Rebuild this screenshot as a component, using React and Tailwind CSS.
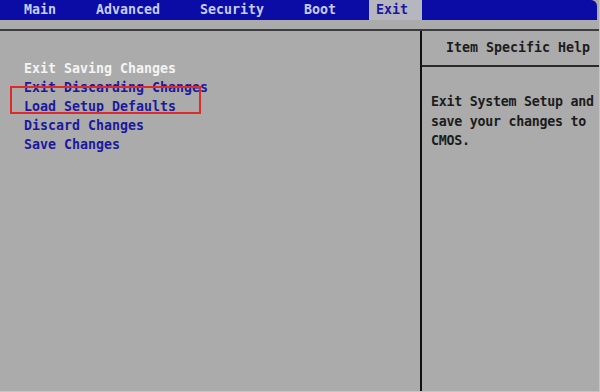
const tabs = ["Main", "Advanced", "Security", "Boot", "Exit"];

const items = [
  { label: "Exit Saving Changes", active: true },
  { label: "Exit Discarding Changes" },
  { label: "Load Setup Defaults" },
  { label: "Discard Changes" },
  { label: "Save Changes" },
];

export default function App() {
  return (
    <div className="relative w-[600px] h-[392px] bg-[#ababab] flex flex-col font-['DejaVu_Sans_Mono',monospace] text-[13.29px] overflow-hidden border-r border-b border-[#c4c4c4]">
      {/* menu bar */}
      <nav className="h-[20px] flex items-stretch pl-[17px] gap-[26px] bg-[#0b0ba6] rounded-tr-[6px] mr-[2px]">
        {tabs.map((t) => (
          <div
            key={t}
            className={
              t === "Exit"
                ? "pl-[7px] pr-[14px] flex items-center bg-[#b6b6be] text-[#1818a0] font-bold"
                : "px-[7px] flex items-center text-[#c6cdf2] font-bold"
            }
          >
            {t}
          </div>
        ))}
      </nav>

      <div className="mt-[9px] flex flex-1 border-t-2 border-[#3c3c3c]">
        {/* option list */}
        <div className="w-[422px] border-r-2 border-[#111] pt-[28px] pl-[24px]">
          {items.map((it) => (
            <div
              key={it.label}
              className={
                it.active
                  ? "h-[19px] leading-[19px] text-[#f4f4f4] font-bold"
                  : "h-[19px] leading-[19px] text-[#1a1a9e] font-bold"
              }
            >
              {it.label}
            </div>
          ))}
        </div>

        {/* help panel */}
        <div className="flex-1 min-w-0 flex flex-col">
          <div className="h-[36px] border-b-2 border-[#2a2a2a] flex items-center pl-[24px] text-[#1c1c1c] font-bold whitespace-nowrap">
            Item Specific Help
          </div>
          <div className="pt-[25px] pl-[9px] leading-[19.5px] text-[#1c1c1c] font-bold whitespace-nowrap tracking-[-0.25px]">
            <div>Exit System Setup and</div>
            <div>save your changes to</div>
            <div>CMOS.</div>
          </div>
        </div>
      </div>

      {/* red highlight annotation */}
      <div className="absolute left-[10px] top-[86px] w-[191px] h-[28px] border-2 border-[#e02a2a] pointer-events-none" />
    </div>
  );
}
